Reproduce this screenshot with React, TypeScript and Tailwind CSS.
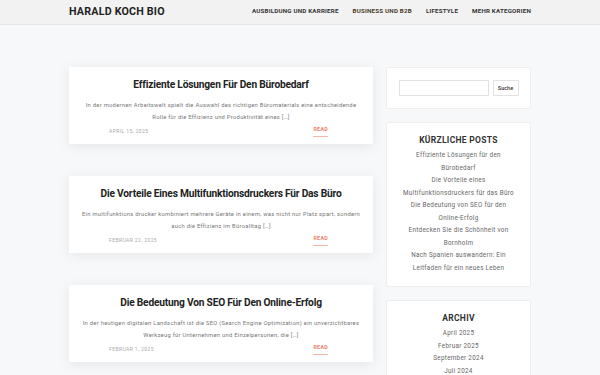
import React from "react";

const posts = [
  {
    title: "Effiziente Lösungen Für Den Bürobedarf",
    excerpt:
      "In der modernen Arbeitswelt spielt die Auswahl des richtigen Büromaterials eine entscheidende Rolle für die Effizienz und Produktivität eines […]",
    date: "April 15, 2025",
  },
  {
    title: "Die Vorteile Eines Multifunktionsdruckers Für Das Büro",
    excerpt:
      "Ein multifunktions drucker kombiniert mehrere Geräte in einem, was nicht nur Platz spart, sondern auch die Effizienz im Büroalltag […]",
    date: "Februar 22, 2025",
  },
  {
    title: "Die Bedeutung Von SEO Für Den Online-Erfolg",
    excerpt:
      "In der heutigen digitalen Landschaft ist die SEO (Search Engine Optimization) ein unverzichtbares Werkzeug für Unternehmen und Einzelpersonen, die […]",
    date: "Februar 1, 2025",
  },
];

const recent = [
  "Effiziente Lösungen für den Bürobedarf",
  "Die Vorteile eines Multifunktionsdruckers für das Büro",
  "Die Bedeutung von SEO für den Online-Erfolg",
  "Entdecken Sie die Schönheit von Bornholm",
  "Nach Spanien auswandern: Ein Leitfaden für ein neues Leben",
];

const archive = ["April 2025", "Februar 2025", "September 2024", "Juli 2024"];

const nav = ["Ausbildung und Karriere", "Business und B2B", "Lifestyle", "Mehr Kategorien"];

export default function App() {
  return (
    <div className="min-h-screen bg-[#f7f8fa] font-['Roboto',sans-serif]">
      <header className="h-[25px] bg-[#f2f2f2] border-b border-[#e6e6e6]">
        <div className="mx-auto w-[462px] h-full flex items-center justify-between">
          <div className="text-[10.7px] font-bold text-[#222] tracking-[0.2px]">HARALD KOCH BIO</div>
          <nav className="flex gap-[14px]">
            {nav.map((n, i) => (
              <span
                key={n}
                className={`text-[6.2px] font-bold uppercase tracking-[0.2px] ${i === 1 ? "text-[#4a3a28]" : "text-[#333]"}`}
              >
                {n}
              </span>
            ))}
          </nav>
        </div>
      </header>

      <main className="mx-auto w-[462px] pt-[42px] flex gap-[13px] items-start">
        <div className="w-[304px] flex flex-col gap-[32px]">
          {posts.map((p) => (
            <article
              key={p.title}
              className="bg-white shadow-[0_2px_12px_rgba(0,0,0,0.08)] px-[10px] pt-[11px] pb-[7px] text-center"
            >
              <h2 className="text-[10.2px] font-bold text-[#222] leading-[14px] tracking-[-0.2px]">{p.title}</h2>
              <p className="mt-[7px] text-[5.8px] leading-[12px] text-[#777] tracking-[0.28px]">
                {p.excerpt}
              </p>
              <div className="mt-[3px] flex items-center justify-between pl-[30px] pr-[35px]">
                <span className="text-[5px] uppercase tracking-[0.4px] text-[#aaa]">{p.date}</span>
                <span className="text-[5.3px] font-bold uppercase text-[#e9826b] border-b border-[#f3b7a6] pb-[2px] tracking-[0.3px]">
                  Read
                </span>
              </div>
            </article>
          ))}
        </div>

        <aside className="w-[145px] flex flex-col gap-[13px]">
          <div className="bg-white border border-[#eeeeee] rounded-[2px] h-[42px] flex items-center justify-center gap-[4px]">
            <div className="w-[90px] h-[16px] border border-[#e2e2e2]" />
            <div className="w-[26px] h-[16px] border border-[#e2e2e2] flex items-center justify-center text-[5.5px] text-[#333] font-medium">
              Suche
            </div>
          </div>

          <div className="bg-white border border-[#eeeeee] rounded-[2px] pt-[11px] pb-[12px] px-[13px] text-center">
            <h3 className="text-[8.5px] font-bold text-[#333] tracking-[0.3px] leading-[12px]">KÜRZLICHE POSTS</h3>
            <ul className="mt-[3px]">
              {recent.map((r) => (
                <li key={r} className="text-[6.3px] leading-[12.5px] text-[#666] tracking-[0.3px]">
                  {r}
                </li>
              ))}
            </ul>
          </div>

          <div className="bg-white border border-[#eeeeee] rounded-[2px] pt-[11px] pb-[10px] text-center">
            <h3 className="text-[8.5px] font-bold text-[#333] tracking-[0.3px] leading-[12px]">ARCHIV</h3>
            <ul className="mt-[3px]">
              {archive.map((a) => (
                <li key={a} className="text-[6.3px] leading-[12.5px] text-[#666] tracking-[0.3px]">
                  {a}
                </li>
              ))}
            </ul>
          </div>
        </aside>
      </main>
    </div>
  );
}
